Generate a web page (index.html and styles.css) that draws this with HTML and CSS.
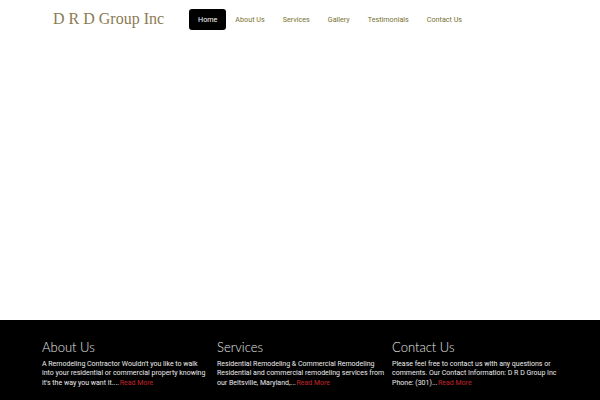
FILE: index.html
```html
<!DOCTYPE html>
<html>
<head>
<meta charset="utf-8">
<link rel="stylesheet" href="styles.css">
</head>
<body>
<header class="header">
  <div class="logo">D R D Group Inc</div>
  <nav class="nav">
    <a class="nav-item active">Home</a>
    <a class="nav-item">About Us</a>
    <a class="nav-item">Services</a>
    <a class="nav-item">Gallery</a>
    <a class="nav-item">Testimonials</a>
    <a class="nav-item">Contact Us</a>
  </nav>
</header>
<main class="main"></main>
<footer class="footer">
  <div class="col">
    <h2 class="col-title">About Us</h2>
    <p class="col-text">A Remodeling Contractor Wouldn't you like to walk into your residential or commercial property knowing it's the way you want it....<a class="more">Read More</a></p>
  </div>
  <div class="col">
    <h2 class="col-title">Services</h2>
    <p class="col-text">Residential Remodeling &amp; Commercial Remodeling Residential and commercial remodeling services from our Beltsville, Maryland,...<a class="more">Read More</a></p>
  </div>
  <div class="col">
    <h2 class="col-title">Contact Us</h2>
    <p class="col-text">Please feel free to contact us with any questions or comments. Our Contact Information: D R D Group Inc Phone: (301)...<a class="more">Read More</a></p>
  </div>
</footer>
</body>
</html>
```
FILE: styles.css
```css
* { box-sizing: border-box; }
html, body { margin: 0; padding: 0; }
body {
  width: 600px;
  height: 400px;
  overflow: hidden;
  background: #fff;
  font-family: Roboto, "Liberation Sans", sans-serif;
}
.header {
  display: flex;
  align-items: center;
  height: 39px;
  padding-left: 53px;
}
.logo {
  font-family: "Liberation Serif", serif;
  font-size: 16px;
  color: #8c7b52;
  width: 136px;
  white-space: nowrap;
  padding-bottom: 2px;
}
.nav {
  display: flex;
  align-items: center;
}
.nav-item {
  font-size: 7.2px;
  color: #77722f;
  padding: 0 9px;
  height: 21px;
  line-height: 21px;
  border-radius: 3px;
}
.nav-item.active {
  background: #000;
  color: #fff;
  padding: 0 9px;
}
.main {
  height: 281px;
}
.footer {
  background: #000;
  height: 80px;
  display: grid;
  grid-template-columns: 175px 175px 175px;
  padding-left: 42px;
  padding-top: 19px;
}
.col { padding-right: 6px; }
.col-title {
  margin: 0 0 5px 0;
  font-family: Lato, "Open Sans", sans-serif;
  font-weight: 300;
  font-size: 13px;
  line-height: 16px;
  color: #e6e6e6;
}
.col-text {
  margin: 0;
  font-size: 7px;
  line-height: 9.4px;
  color: #ececec;
}
.more { color: #c0262c; margin-left: 0.5px; }
```
